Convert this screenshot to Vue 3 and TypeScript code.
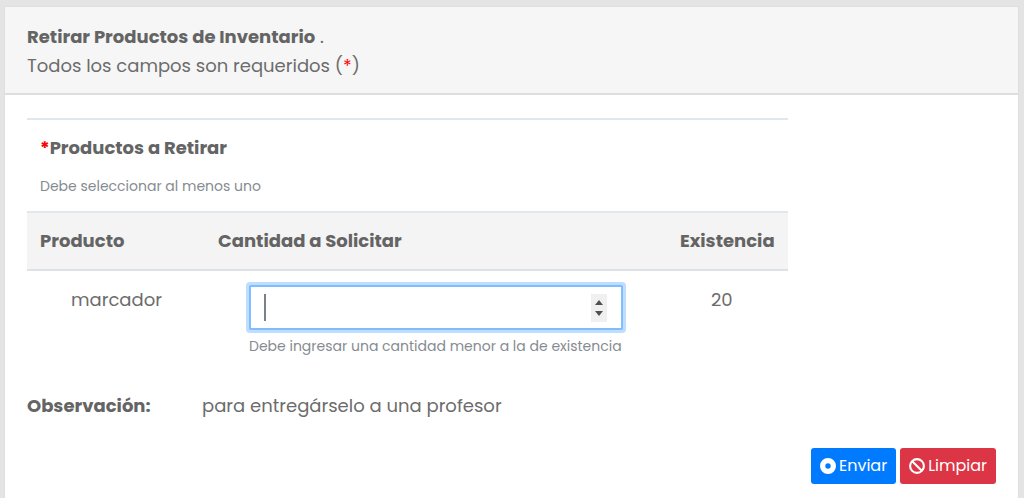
<script setup lang="ts">
import { onMounted, ref } from 'vue'

interface Product {
  id: number
  name: string
  stock: number
}

const products: Product[] = [{ id: 1, name: 'marcador', stock: 20 }]
const quantities = ref<Record<number, number | string>>({ 1: '' })
const note = ref('para entregárselo a una profesor')
const form = ref<HTMLFormElement | null>(null)

function clearForm() {
  quantities.value = { 1: '' }
  note.value = ''
}

onMounted(() => {
  form.value?.querySelector<HTMLInputElement>('.quantity')?.focus()
})
</script>

<template>
  <main class="card">
    <header class="card-header">
      <strong>Retirar Productos de Inventario</strong> .<br />
      Todos los campos son requeridos (<span class="required">*</span>)
    </header>
    <form ref="form" class="card-body" @submit.prevent>
      <table class="products">
        <colgroup>
          <col class="col-product" />
          <col />
          <col class="col-stock" />
        </colgroup>
        <thead>
          <tr>
            <th colspan="3" class="caption">
              <span class="required">*</span>Productos a Retirar
              <small class="hint">Debe seleccionar al menos uno</small>
            </th>
          </tr>
          <tr class="columns">
            <th scope="col">Producto</th>
            <th scope="col">Cantidad a Solicitar</th>
            <th scope="col">Existencia</th>
          </tr>
        </thead>
        <tbody>
          <tr v-for="product in products" :key="product.id">
            <td class="name">{{ product.name }}</td>
            <td class="amount">
              <div class="field">
                <input
                  v-model="quantities[product.id]"
                  class="quantity"
                  type="number"
                  min="1"
                  :max="product.stock"
                  :aria-label="`Cantidad a Solicitar: ${product.name}`"
                />
                <span v-if="quantities[product.id] === ''" class="caret" aria-hidden="true"></span>
              </div>
              <small class="hint">Debe ingresar una cantidad menor a la de existencia</small>
            </td>
            <td class="stock">{{ product.stock }}</td>
          </tr>
        </tbody>
      </table>
      <div class="note">
        <label for="note">Observación:</label>
        <input id="note" v-model="note" type="text" />
      </div>
      <div class="actions">
        <button type="submit" class="btn send">
          <svg viewBox="0 0 16 16" aria-hidden="true">
            <path fill="currentColor" fill-rule="evenodd" d="M8 0a8 8 0 1 1 0 16A8 8 0 0 1 8 0Zm0 5.3a2.7 2.7 0 1 0 0 5.4 2.7 2.7 0 0 0 0-5.4Z" />
          </svg>
          Enviar
        </button>
        <button type="button" class="btn clear" @click="clearForm">
          <svg viewBox="0 0 16 16" aria-hidden="true">
            <circle cx="8" cy="8" r="6.9" fill="none" stroke="currentColor" stroke-width="2.1" />
            <path d="M3.2 3.2 12.8 12.8" stroke="currentColor" stroke-width="2.1" />
          </svg>
          Limpiar
        </button>
      </div>
    </form>
  </main>
</template>

<style>
body {
  background: #e4e4e4;
}
</style>

<style scoped>
* {
  box-sizing: border-box;
}
.card {
  margin: 6px 5px 0 4px;
  border: 1px solid #dfdfdf;
  border-bottom: 0;
  background: #fff;
  color: #6c6c6c;
  font: 18px/29px Poppins, Inter, "Noto Sans", sans-serif;
}
.card-header {
  padding: 15px 22px 13px;
  border-bottom: 2px solid #dedede;
  background: #f6f6f6;
}
strong,
th,
label {
  color: #646464;
  font-weight: 700;
}
.required {
  color: #f00;
}
.card-body {
  padding: 23px 22px 14px;
}
.products {
  width: 100%;
  max-width: 761px;
  border-collapse: collapse;
  table-layout: fixed;
}
.col-product {
  width: 178px;
}
.col-stock {
  width: 121px;
}
th {
  padding: 13px 13px 14px;
  border-top: 2px solid #e2e7eb;
  text-align: left;
}
.columns th {
  border-bottom: 2px solid #dee2e6;
  background: #f4f4f4;
}
.hint {
  display: block;
  color: #868b92;
  font-size: 14px;
  font-weight: 400;
  line-height: 22px;
}
.caption .hint {
  margin-top: 13px;
}
td {
  padding: 14px 13px 0;
  vertical-align: top;
}
.name {
  padding-left: 44px;
}
.amount {
  padding-right: 44px;
  padding-left: 44px;
}
.stock {
  padding-left: 44px;
}
.field {
  position: relative;
}
.quantity {
  display: block;
  width: 100%;
  height: 45px;
  padding: 8px 14px;
  border: 2px solid #80bdff;
  border-radius: 1px;
  outline: 3px solid #bfdeff;
  background: #fff;
  color: #495057;
  caret-color: transparent;
  font: inherit;
}
.quantity::-webkit-inner-spin-button {
  appearance: none;
  width: 16px;
  height: 28px;
  background: #f0f0f0 url("data:image/svg+xml,%3Csvg xmlns='http://www.w3.org/2000/svg' viewBox='0 0 16 28'%3E%3Cpath fill='%23505050' d='M4 11 8 6l4 5ZM4 17l4 5 4-5Z'/%3E%3C/svg%3E") center / 16px 28px no-repeat;
  opacity: 1;
}
.caret {
  position: absolute;
  top: 9px;
  left: 15px;
  width: 2px;
  height: 27px;
  background: #7b8187;
  pointer-events: none;
}
.amount .hint {
  margin-top: 5px;
  white-space: nowrap;
}
.note {
  display: flex;
  margin-top: 34px;
}
.note label {
  flex: 0 0 175px;
}
.note input {
  flex: 1;
  min-width: 0;
  padding: 0;
  border: 0;
  outline: 0;
  background: none;
  color: inherit;
  font: inherit;
}
.actions {
  display: flex;
  justify-content: flex-end;
  gap: 4px;
  margin-top: 28px;
}
.btn {
  display: flex;
  align-items: center;
  gap: 3px;
  height: 36px;
  padding: 0 9px;
  border: 0;
  border-radius: 3px;
  color: #fff;
  font: 16px/24px Poppins, Inter, "Noto Sans", sans-serif;
}
.btn svg {
  width: 16px;
  height: 16px;
}
.send {
  background: #007bff;
}
.clear {
  background: #dc3545;
}
</style>
